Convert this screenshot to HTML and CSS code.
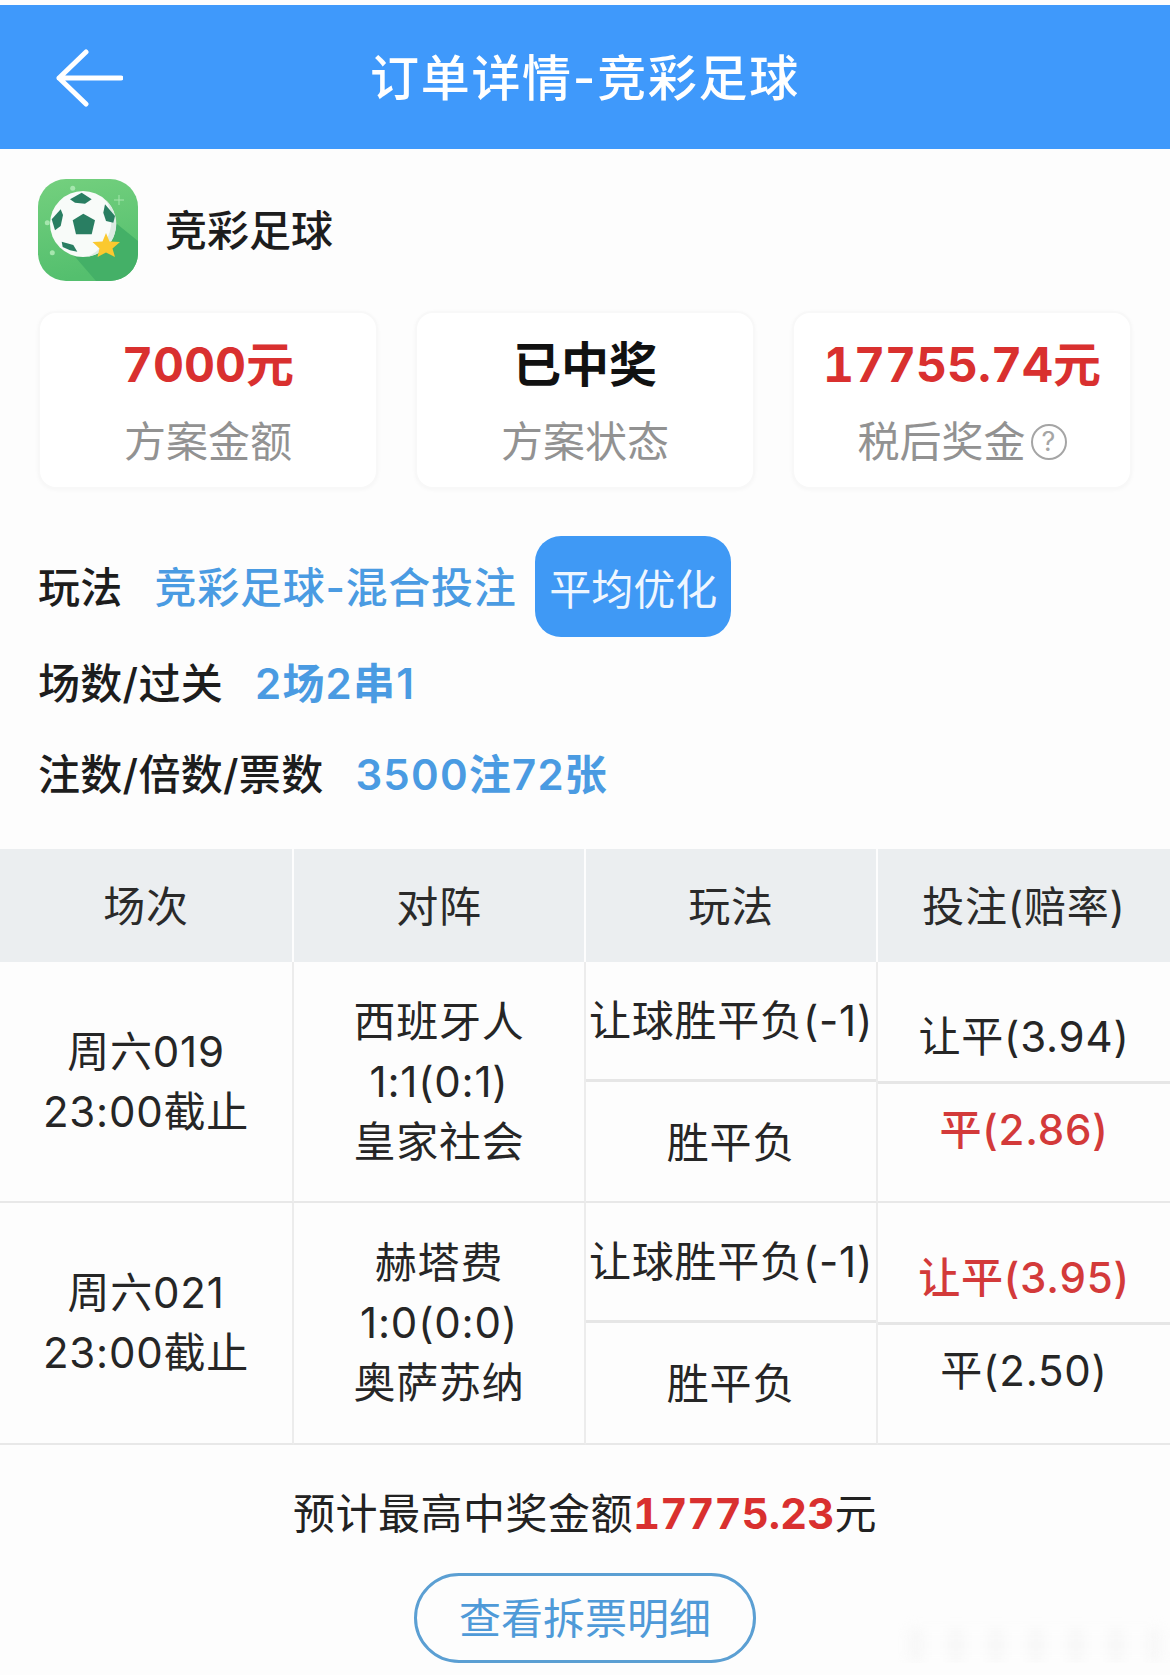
FILE: index.html
```html
<!DOCTYPE html>
<html lang="zh-CN">
<head>
    <meta charset="UTF-8">
    <meta name="viewport" content="width=device-width, initial-scale=1.0">
    <title>订单详情-竞彩足球</title>
    <link rel="stylesheet" href="styles.css">
</head>
<body>
    <div class="header">
        <svg class="back" viewBox="0 0 68 58" width="68" height="58">
            <path d="M31 3 L4 29 L31 55 M4 29 H66" fill="none" stroke="#fff" stroke-width="5" stroke-linecap="round" stroke-linejoin="round"/>
        </svg>
        <h1>订单详情-竞彩足球</h1>
    </div>

    <div class="brand">
        <svg class="app-icon" viewBox="0 0 100 102" width="100" height="102">
            <defs>
                <linearGradient id="bg" x1="0" y1="0" x2="0.2" y2="1">
                    <stop offset="0" stop-color="#74d07e"/>
                    <stop offset="1" stop-color="#54bf6e"/>
                </linearGradient>
                <clipPath id="tile"><rect width="100" height="102" rx="28"/></clipPath>
            </defs>
            <rect width="100" height="102" rx="28" fill="url(#bg)"/>
            <path d="M79 45 L100 62 V102 H58 L32 72 Z" fill="#44b067" clip-path="url(#tile)"/>
            <circle cx="34.7" cy="9.3" r="2.5" fill="#a6e6ae"/>
            <circle cx="14.3" cy="73.7" r="2.5" fill="#a6e6ae"/>
            <circle cx="9.3" cy="43.7" r="2.5" fill="#a6e6ae"/>
            <path d="M81 16 V26 M76 21 H86" stroke="#a6e6ae" stroke-width="1"/>
            <circle cx="45" cy="45" r="33" fill="#f8fbf9"/>
            <path d="M68 21 A33 33 0 0 1 50 77.6 A40 40 0 0 0 68 21 Z" fill="#dcebe3"/>
            <g fill="#297e62">
                <path d="M45.3 34.7 L57 41.3 L53.7 55.3 L38 55.3 L34.7 41.3 Z"/>
                <path d="M32 20.3 L43.7 13.7 L53.7 20.3 L47 24.7 L37 23.7 Z"/>
                <path d="M22.7 30.3 L13.7 40.3 L17 51.3 L22.7 47 L25 36 Z"/>
                <path d="M67 25.3 L77 37 L75.3 43.7 L68 42 L65.3 33.7 Z"/>
                <path d="M23.7 62.7 L35.3 66 L39.3 72.7 L32 71.3 L24.7 68 Z"/>
            </g>
            <path d="M68 54 L71.5 62.5 L82 63 L74.5 69.5 L77 78 L68 73.5 L59.5 78 L61.5 69.5 L54.5 63 L64.5 62.5 Z" fill="#fbc92f"/>
        </svg>
        <span class="brand-name">竞彩足球</span>
    </div>

    <div class="cards">
        <div class="card">
            <div class="card-value red">7000元</div>
            <div class="card-label">方案金额</div>
        </div>
        <div class="card">
            <div class="card-value">已中奖</div>
            <div class="card-label">方案状态</div>
        </div>
        <div class="card">
            <div class="card-value red">17755.74元</div>
            <div class="card-label">税后奖金<span class="help">?</span></div>
        </div>
    </div>

    <div class="info">
        <div class="info-row first">
            <span class="info-label">玩法</span>
            <span class="info-value">竞彩足球-混合投注</span>
            <span class="pill">平均优化</span>
        </div>
        <div class="info-row">
            <span class="info-label">场数/过关</span>
            <span class="info-value num">2场2串1</span>
        </div>
        <div class="info-row">
            <span class="info-label">注数/倍数/票数</span>
            <span class="info-value num">3500注72张</span>
        </div>
    </div>

    <div class="table">
        <div class="th">场次</div>
        <div class="th">对阵</div>
        <div class="th">玩法</div>
        <div class="th">投注(赔率)</div>

        <div class="td lined">周六019<br>23:00截止</div>
        <div class="td lined">西班牙人<br>1:1(0:1)<br>皇家社会</div>
        <div class="td lined split">
            <div class="sub sub-top">让球胜平负(-1)</div>
            <div class="sub sub-bottom">胜平负</div>
        </div>
        <div class="td lined split last">
            <div class="sub bet-top">让平(3.94)</div>
            <div class="sub bet-bottom red">平(2.86)</div>
        </div>

        <div class="td lined">周六021<br>23:00截止</div>
        <div class="td lined">赫塔费<br>1:0(0:0)<br>奥萨苏纳</div>
        <div class="td lined split">
            <div class="sub sub-top">让球胜平负(-1)</div>
            <div class="sub sub-bottom">胜平负</div>
        </div>
        <div class="td lined split last">
            <div class="sub bet-top red">让平(3.95)</div>
            <div class="sub bet-bottom">平(2.50)</div>
        </div>
    </div>

    <div class="summary">预计最高中奖金额<b>17775.23</b>元</div>
    <div class="actions">
        <a class="detail-btn">查看拆票明细</a>
    </div>
    <div class="watermark"></div>
</body>
</html>
```

FILE: styles.css
```css
* {
    box-sizing: border-box;
}

body {
    margin: 0;
    padding-top: 5px;
    background-color: #fdfdfd;
    color: #222;
    font-family: Inter, "Noto Sans CJK SC", sans-serif;
    font-size: 42px;
    position: relative;
}

.red {
    color: #d9302f;
}

.header {
    height: 144px;
    background-color: #3f99fb;
    display: flex;
    align-items: center;
    justify-content: center;
    position: relative;
}

.header h1 {
    margin: 0 0 6px;
    color: #fff;
    font-size: 49px;
    font-weight: 500;
    letter-spacing: 1.7px;
}

.back {
    position: absolute;
    left: 55px;
    top: 44px;
}

.brand {
    display: flex;
    align-items: center;
    gap: 27px;
    padding: 30px 0 0 38px;
}

.brand-name {
    font-size: 42px;
    font-weight: 500;
    color: #1d1d1d;
    margin-bottom: 6px;
}

.cards {
    display: grid;
    grid-template-columns: repeat(3, 340px);
    gap: 37px;
    padding: 30px 0 0 38px;
}

.card {
    height: 178px;
    background-color: #fff;
    border: 2px solid #f8f8f8;
    border-radius: 18px;
    box-shadow: 0 1px 4px rgba(0, 0, 0, 0.03);
    text-align: center;
    padding-top: 24px;
}

.card-value {
    font-size: 48px;
    font-weight: bold;
    font-variant-numeric: tabular-nums;
    line-height: 56px;
    color: #111;
}

.card-value.red {
    color: #d9302f;
}

.card-label {
    margin-top: 21px;
    font-size: 42px;
    line-height: 56px;
    color: #929292;
    display: flex;
    align-items: center;
    justify-content: center;
}

.help {
    width: 36px;
    height: 36px;
    margin-left: 5px;
    border: 2px solid #a5a5a5;
    border-radius: 50%;
    font-size: 27px;
    line-height: 32px;
    color: #a5a5a5;
}

.info {
    padding: 46px 0 0 38px;
}

.info-row {
    display: flex;
    align-items: center;
    height: 91px;
    font-size: 42px;
}

.info-row.first {
    height: 102px;
}

.info-label {
    font-weight: 500;
    color: #1d1d1d;
    letter-spacing: 0.3px;
    margin-right: 32px;
    margin-bottom: 4px;
}

.info-value {
    font-weight: 500;
    color: #4a9be2;
    letter-spacing: 0.7px;
    margin-bottom: 4px;
}

.info-value.num {
    font-weight: 600;
    letter-spacing: 1.2px;
}

.pill {
    width: 196px;
    height: 101px;
    margin-left: 19px;
    background-color: #3f99f5;
    border-radius: 26px;
    color: #eef6ff;
    font-size: 42px;
    display: flex;
    align-items: center;
    justify-content: center;
}

.table {
    display: grid;
    grid-template-columns: 294px 292px 292px 292px;
    grid-template-rows: 113px 241px 242px;
    margin-top: 30px;
    letter-spacing: 0.8px;
}

.th {
    margin-right: 2px;
    background-color: #ebeef0;
    display: flex;
    align-items: center;
    justify-content: center;
    color: #2a2a2a;
    padding-bottom: 4px;
}

.th:nth-child(4) {
    margin-right: 0;
}

.td {
    display: flex;
    align-items: center;
    justify-content: center;
    text-align: center;
    line-height: 60px;
    color: #262626;
}

.lined {
    border-right: 2px solid #ececec;
    border-bottom: 2px solid #e8e8e8;
}

.split {
    flex-direction: column;
    align-items: stretch;
    justify-content: flex-start;
    white-space: nowrap;
}

.last {
    border-right: none;
}

.sub {
    text-align: center;
}

.sub-top {
    height: 120px;
    padding-top: 29px;
    border-bottom: 3px solid #e6e6e6;
}

.sub-bottom {
    padding-top: 31px;
}

.bet-top {
    height: 122px;
    padding-top: 45px;
    border-bottom: 3px solid #e6e6e6;
}

.bet-bottom {
    padding-top: 16px;
}

.sub.red {
    color: #d33a3a;
    font-weight: 500;
}

.summary {
    margin-top: 39px;
    line-height: 60px;
    text-align: center;
    color: #222;
    letter-spacing: 0.5px;
}

.summary b {
    color: #d9302f;
    font-variant-numeric: tabular-nums;
    letter-spacing: 0;
}

.actions {
    display: flex;
    justify-content: center;
    margin-top: 29px;
}

.detail-btn {
    width: 342px;
    height: 90px;
    border: 3px solid #5b9fd3;
    border-radius: 45px;
    color: #4f9ad8;
    padding-bottom: 6px;
    display: flex;
    align-items: center;
    justify-content: center;
}

/* faint blurred stamp in the corner of the screenshot */
.watermark {
    position: absolute;
    top: 1628px;
    left: 909px;
    width: 252px;
    height: 34px;
    background: repeating-linear-gradient(90deg, #f3f3f3 0 14px, #fdfdfd 14px 40px);
    filter: blur(6px);
    opacity: 0.6;
}
```
